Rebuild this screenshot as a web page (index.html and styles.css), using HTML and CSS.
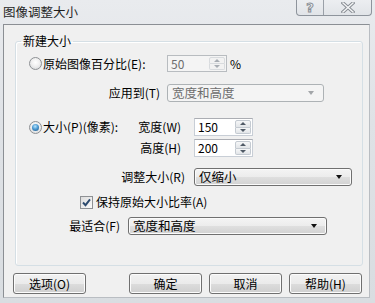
FILE: index.html
```html
<!DOCTYPE html>
<html lang="zh-CN">
<head>
    <meta charset="UTF-8">
    <title>图像调整大小</title>
    <link rel="stylesheet" href="styles.css">
</head>
<body>
<div class="window">
    <div class="titlebar">
        <span class="title">图像调整大小</span>
        <div class="cap-btns">
            <span class="cap-btn help">?</span>
            <span class="cap-btn close">
                <svg width="14" height="11" viewBox="0 0 14 11">
                    <path d="M2 1 L12 10 M12 1 L2 10" stroke="#8a8f96" stroke-width="3.4" stroke-linecap="square" fill="none"/>
                    <path d="M2 1 L12 10 M12 1 L2 10" stroke="#f4f5f6" stroke-width="1.4" stroke-linecap="square" fill="none"/>
                </svg>
            </span>
        </div>
    </div>
    <div class="client">
        <fieldset class="group">
            <legend>新建大小</legend>
            <div class="row row-1">
                <div class="lead lead-pct"><span class="radio"></span><span class="opt">原始图像百分比(E):</span></div>
                <div class="spin disabled w60"><span class="val">50</span><span class="spin-btns"><i class="up"></i><i class="down"></i></span></div>
                <span class="unit">%</span>
            </div>
            <div class="row row-2">
                <span class="label l144">应用到(T)</span>
                <div class="combo disabled w157 ml7"><span>宽度和高度</span><i class="arrow"></i></div>
            </div>
            <div class="row row-3">
                <div class="lead lead-size"><span class="radio on"></span><span class="opt">大小(P)(像素):</span><span class="push">宽度(W)</span></div>
                <div class="spin w59 ml13"><span class="val">150</span><span class="spin-btns"><i class="up"></i><i class="down"></i></span></div>
            </div>
            <div class="row row-4">
                <span class="label l165">高度(H)</span>
                <div class="spin w59 ml13"><span class="val">200</span><span class="spin-btns"><i class="up"></i><i class="down"></i></span></div>
            </div>
            <div class="row row-5">
                <span class="label l169">调整大小(R)</span>
                <div class="combo w158 ml9"><span>仅缩小</span><i class="arrow"></i></div>
            </div>
            <div class="row row-6">
                <span class="check">
                    <svg width="11" height="11" viewBox="0 0 11 11"><path d="M2 5.5 L4.5 8.2 L9 2.3" stroke="#2c4a6e" stroke-width="1.9" fill="none"/></svg>
                </span>
                <span class="opt">保持原始大小比率(A)</span>
            </div>
            <div class="row row-7">
                <span class="label l104">最适合(F)</span>
                <div class="combo w199 ml8"><span>宽度和高度</span><i class="arrow"></i></div>
            </div>
        </fieldset>
        <div class="buttons">
            <span class="btn">选项(O)</span>
            <span class="btn first-right">确定</span>
            <span class="btn">取消</span>
            <span class="btn">帮助(H)</span>
        </div>
    </div>
</div>
</body>
</html>
```

FILE: styles.css
```css
*{
    margin: 0;
    padding: 0;
    box-sizing: border-box;
}
body{
    margin: 0;
    width: 375px;
    height: 303px;
    overflow: hidden;
    font-family: "Noto Sans CJK SC", "DejaVu Sans", sans-serif;
    font-size: 12px;
    color: #000;
}
.window{
    height: 303px;
    background: linear-gradient(180deg, #e9ebee 0%, #dfe2e6 40%, #d9dde1 100%);
}
.titlebar{
    height: 24px;
    display: flex;
    justify-content: space-between;
    align-items: flex-start;
}
.title{
    margin: 3px 0 0 3px;
    font-size: 12.5px;
    line-height: 18px;
    color: #1e1e1e;
}
.cap-btns{
    display: flex;
    margin-right: 3px;
    height: 16px;
    border: 1px solid #8e949c;
    border-top: none;
    border-radius: 0 0 4px 4px;
    background: linear-gradient(180deg, #eceef1, #e1e4e8);
    overflow: hidden;
}
.cap-btn{
    display: flex;
    align-items: center;
    justify-content: center;
}
.help{
    width: 27px;
    border-right: 1px solid #9aa0a8;
    font-family: "DejaVu Sans", sans-serif;
    font-size: 13px;
    font-weight: bold;
    line-height: 14px;
    color: #f3f4f5;
    -webkit-text-stroke: 1px #8a8f96;
}
.close{
    width: 47px;
}
.client{
    margin-left: 3px;
    width: 367px;
    height: 274px;
    background: #f0f0f0;
    border: 1px solid #8b8f94;
    border-right-color: #b9bdc2;
    border-bottom-color: #b9bdc2;
}
.group{
    margin: 9px 0 0 11px;
    width: 348px;
    height: 232px;
    border: 1px solid #d5dfe5;
    border-radius: 3px;
    box-shadow: inset 1px 1px 0 #fff;
    padding: 0;
}
.group legend{
    margin-left: 5px;
    padding: 0 2px;
    line-height: 14px;
    font-size: 12px;
}
.row{
    display: flex;
    align-items: center;
    height: 18px;
    line-height: 16px;
    white-space: nowrap;
}
.row-1{ margin-top: 7px; height: 17px; }
.row-2{ margin-top: 12px; }
.row-3{ margin-top: 16px; }
.row-4{ margin-top: 3px; }
.row-5{ margin-top: 11px; }
.row-6{ margin-top: 8px; height: 16px; }
.row-7{ margin-top: 7px; }

.lead{
    display: flex;
    align-items: center;
    padding-left: 13px;
}
.lead-pct{ width: 151px; }
.lead-size{ width: 165px; }
.push{ margin-left: auto; }
.opt{ margin-left: 1px; }
.label{
    text-align: right;
}
.l104{ width: 104px; }
.l144{ width: 144px; }
.l165{ width: 165px; }
.l169{ width: 169px; }
.ml7{ margin-left: 7px; }
.ml8{ margin-left: 8px; }
.ml9{ margin-left: 9px; }
.ml13{ margin-left: 13px; }
.w59{ width: 59px; }
.w60{ width: 60px; }
.w157{ width: 157px; }
.w158{ width: 158px; }
.w199{ width: 199px; }

/* radio / check */
.radio{
    width: 13px;
    height: 13px;
    border-radius: 50%;
    border: 1px solid #8e9194;
    background: radial-gradient(circle at 50% 40%, #ffffff 0%, #f0f0f0 45%, #cfd2d5 100%);
    display: flex;
    align-items: center;
    justify-content: center;
    flex: none;
}
.radio.on::after{
    content: "";
    width: 7px;
    height: 7px;
    border-radius: 50%;
    background: radial-gradient(circle at 45% 35%, #b9e4fb 0%, #4c9bd4 45%, #1d4f7c 100%);
}
.row-6 .opt{ margin-left: 3px; }
.check{
    margin-left: 64px;
    width: 13px;
    height: 13px;
    border: 1px solid #8e9194;
    background: linear-gradient(135deg, #dcdcdc, #fbfbfb);
    display: flex;
    align-items: center;
    justify-content: center;
    flex: none;
}

/* spin box */
.spin{
    height: 18px;
    display: flex;
    align-items: stretch;
    justify-content: space-between;
    background: #fff;
    border: 1px solid #c8ced6;
    border-top-color: #abadb3;
}
.spin .val{
    padding-left: 3px;
    line-height: 16px;
}
.spin.disabled{
    height: 17px;
    background: #f4f4f4;
    border-color: #b8bcc0;
    color: #6d6d6d;
}
.spin-btns{
    width: 16px;
    display: flex;
    flex-direction: column;
    margin: 1px;
}
.spin-btns i{
    flex: 1;
    display: flex;
    align-items: center;
    justify-content: center;
    border: 1px solid #c4cad1;
    background: linear-gradient(180deg, #f6f7f8, #e2e5e8);
}
.spin-btns .up{ border-radius: 2px 2px 0 0; }
.spin-btns .down{ border-radius: 0 0 2px 2px; border-top: none; }
.spin-btns .up::after{
    content: "";
    border-left: 3px solid transparent;
    border-right: 3px solid transparent;
    border-bottom: 3px solid #505a66;
}
.spin-btns .down::after{
    content: "";
    border-left: 3px solid transparent;
    border-right: 3px solid transparent;
    border-top: 3px solid #505a66;
}
.spin.disabled .spin-btns i{
    border-color: #d8dbde;
    background: #f2f2f2;
}
.spin.disabled .spin-btns i::after{
    border-bottom-color: #a8adb3;
    border-top-color: #a8adb3;
}
.unit{
    margin-left: 3px;
}

/* combo */
.combo{
    height: 18px;
    display: flex;
    align-items: center;
    justify-content: space-between;
    padding: 0 9px 0 4px;
    border: 1px solid #707070;
    border-radius: 3px;
    background: linear-gradient(180deg, #f4f4f4 0%, #ececec 50%, #dfdfdf 51%, #d2d2d2 100%);
    box-shadow: inset 0 0 0 1px #fbfbfb;
    font-size: 12.5px;
}
.combo .arrow{
    border-left: 3.5px solid transparent;
    border-right: 3.5px solid transparent;
    border-top: 4px solid #111;
}
.combo.disabled{
    background: #f4f4f4;
    border-color: #adb2b5;
    box-shadow: none;
    color: #6d6d6d;
}
.combo.disabled .arrow{
    border-top-color: #a3a6a9;
}

/* dialog buttons */
.buttons{
    display: flex;
    margin: 7px 0 0 9px;
    width: 349px;
    gap: 7px;
}
.btn{
    width: 73px;
    height: 21px;
    display: flex;
    align-items: center;
    justify-content: center;
    border: 1px solid #707070;
    border-radius: 3px;
    background: linear-gradient(180deg, #f2f2f2 0%, #ebebeb 50%, #dddddd 51%, #cfcfcf 100%);
    box-shadow: inset 0 0 0 1px #fcfcfc;
    line-height: 16px;
}
.first-right{
    margin-left: auto;
}
```
